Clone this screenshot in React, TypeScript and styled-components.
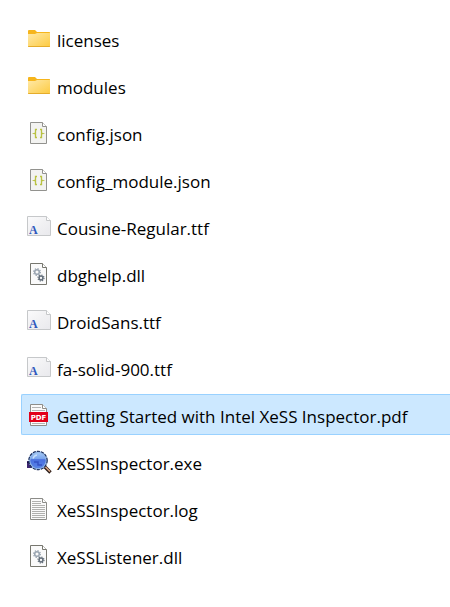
import React, { useState } from "react";
import styled, { createGlobalStyle } from "styled-components";

const GlobalStyle = createGlobalStyle`
  body {
    margin: 0;
    background: #ffffff;
    color: #000000;
    font-family: "Open Sans", "Noto Sans", sans-serif;
  }
`;

const FileList = styled.ul`
  list-style: none;
  margin: 0;
  padding: 18px 0 20px 21px;
  display: flex;
  flex-direction: column;
  gap: 6px;
  overflow: hidden;
`;

const FileRow = styled.button<{ $selected: boolean }>`
  box-sizing: border-box;
  width: 100%;
  height: 41px;
  display: flex;
  align-items: center;
  gap: 5px;
  padding: 0 0 0 5px;
  border: 1px solid ${(p) => (p.$selected ? "#99d1ff" : "transparent")};
  border-right: 0;
  border-radius: 2px 0 0 2px;
  background: ${(p) => (p.$selected ? "#cce8ff" : "transparent")};
  color: inherit;
  font: inherit;
  text-align: left;
  cursor: default;
`;

const IconBox = styled.svg`
  flex: none;
  display: block;
  width: 25px;
  height: 27px;
`;

const FileName = styled.span`
  font-size: 17px;
  line-height: 24px;
  padding-top: 4px;
  white-space: nowrap;
`;

type Kind = "folder" | "json" | "font" | "dll" | "pdf" | "exe" | "log";

const Page = ({ stroke = "#8c8c88", fill = "#fafafa" }) => (
  <>
    <path d="M3.5 3.5H15.5L19.5 7.5V24.5H3.5Z" fill={fill} stroke={stroke} />
    <path d="M15.5 3.5V7.5H19.5" fill="#ffffff" stroke={stroke} />
  </>
);

const Gear = ({ x, y, r, color }: { x: number; y: number; r: number; color: string }) => (
  <g stroke={color} fill="none">
    <circle cx={x} cy={y} r={r} strokeWidth="1.5" />
    <circle cx={x} cy={y} r={r + 1.1} strokeWidth="1.2" strokeDasharray={`${((r + 1.1) * Math.PI) / 8} ${((r + 1.1) * Math.PI) / 8}`} />
  </g>
);

const drawings: Record<Kind, React.ReactNode> = {
  folder: (
    <>
      <defs>
        <linearGradient id="folderFace" x1="0" y1="0" x2="1" y2="1">
          <stop offset="0" stopColor="#ffe9a8" />
          <stop offset="1" stopColor="#fdcb42" />
        </linearGradient>
      </defs>
      <path d="M1 6Q1 5 2 5H8L10 7H22.5L23 7.5V12H1Z" fill="#f6b51c" />
      <path d="M1 9H8L10 8H23V21.5H1Z" fill="url(#folderFace)" />
      <path d="M1 21H23V21.5L22.5 22H1.5L1 21.5Z" fill="#e5ac2a" />
    </>
  ),
  json: (
    <>
      <Page stroke="#92928e" fill="#f3f3f1" />
      <path
        d="M10 10.5H8.5V14L7 14.5L8.5 15V18.5H10M13 10.5H14.5V14L16 14.5L14.5 15V18.5H13"
        fill="none"
        stroke="#b9c242"
        strokeWidth="1.3"
      />
    </>
  ),
  font: (
    <>
      <defs>
        <linearGradient id="fontSheet" x1="0" y1="0" x2="1" y2="1">
          <stop offset="0" stopColor="#fbfbfc" />
          <stop offset="0.5" stopColor="#f1f1f3" />
          <stop offset="1" stopColor="#e9e9ed" />
        </linearGradient>
      </defs>
      <path d="M0.5 3.5H19.5L23.5 7.5V22.5H0.5Z" fill="url(#fontSheet)" stroke="#c6c8ca" />
      <path d="M19.5 3.5V7.5H23.5" fill="#ffffff" stroke="#c6c8ca" />
      <text x="2" y="21" fontFamily="Liberation Serif, serif" fontWeight="bold" fontSize="12" fill="#2f59bd">
        A
      </text>
    </>
  ),
  dll: (
    <>
      <Page stroke="#77776f" />
      <Gear x={10} y={12} r={2.3} color="#9aa5b1" />
      <Gear x={14} y={18} r={1.9} color="#65707c" />
    </>
  ),
  pdf: (
    <>
      <Page stroke="#8e8e8a" />
      <path d="M5 6.5H14M5 9.5H18M5 22.5H18" stroke="#b4b4b4" />
      <rect x="2" y="11" width="19" height="10" fill="#e2001a" />
      <text
        x="11.5"
        y="19"
        textAnchor="middle"
        fontFamily="DejaVu Sans, sans-serif"
        fontWeight="bold"
        fontSize="7"
        fill="#ffffff"
      >
        PDF
      </text>
    </>
  ),
  exe: (
    <>
      <defs>
        <linearGradient id="lens" x1="0" y1="0" x2="0" y2="1">
          <stop offset="0" stopColor="#a9ccf5" />
          <stop offset="0.4" stopColor="#7aa5ee" />
          <stop offset="0.45" stopColor="#4a70df" />
          <stop offset="1" stopColor="#5a85e8" />
        </linearGradient>
      </defs>
      <path d="M0 13H5V20H0Z" fill="#3c2670" />
      <path d="M0 14.5H3" stroke="#17103a" />
      <path d="M17.5 18.5L23.5 24.5" stroke="#2a1a16" strokeWidth="3.4" />
      <path d="M18 18.5L23 23.5" stroke="#d8a583" strokeWidth="1.6" />
      <circle cx="11" cy="12.5" r="8.6" fill="url(#lens)" stroke="#8fb4e4" strokeWidth="1.8" />
      <circle cx="11" cy="12.5" r="9.2" fill="none" stroke="#14234f" strokeWidth="1.1" strokeDasharray="3 1.2" />
      <path d="M6 10.5Q7 7.5 10 7" fill="none" stroke="#c7e0fb" strokeWidth="1.4" />
      <path d="M7 14H11V17H15" fill="none" stroke="#3451c4" strokeWidth="1.5" />
    </>
  ),
  log: (
    <>
      <Page stroke="#8c8c88" />
      <path
        d="M5 6.5H14M5 8.5H14M5 10.5H18M5 12.5H18M5 14.5H18M5 16.5H18M5 18.5H18M5 20.5H18M5 22.5H18"
        stroke="#b0b0ae"
      />
    </>
  ),
};

const files: { name: string; kind: Kind }[] = [
  { name: "licenses", kind: "folder" },
  { name: "modules", kind: "folder" },
  { name: "config.json", kind: "json" },
  { name: "config_module.json", kind: "json" },
  { name: "Cousine-Regular.ttf", kind: "font" },
  { name: "dbghelp.dll", kind: "dll" },
  { name: "DroidSans.ttf", kind: "font" },
  { name: "fa-solid-900.ttf", kind: "font" },
  { name: "Getting Started with Intel XeSS Inspector.pdf", kind: "pdf" },
  { name: "XeSSInspector.exe", kind: "exe" },
  { name: "XeSSInspector.log", kind: "log" },
  { name: "XeSSListener.dll", kind: "dll" },
];

export default function App() {
  const [selected, setSelected] = useState(8);
  return (
    <>
      <GlobalStyle />
      <FileList>
        {files.map((file, i) => (
          <li key={file.name}>
            <FileRow
              type="button"
              $selected={i === selected}
              aria-pressed={i === selected}
              onClick={() => setSelected(i)}
            >
              <IconBox viewBox="0 0 25 27" aria-hidden="true">
                {drawings[file.kind]}
              </IconBox>
              <FileName>{file.name}</FileName>
            </FileRow>
          </li>
        ))}
      </FileList>
    </>
  );
}
